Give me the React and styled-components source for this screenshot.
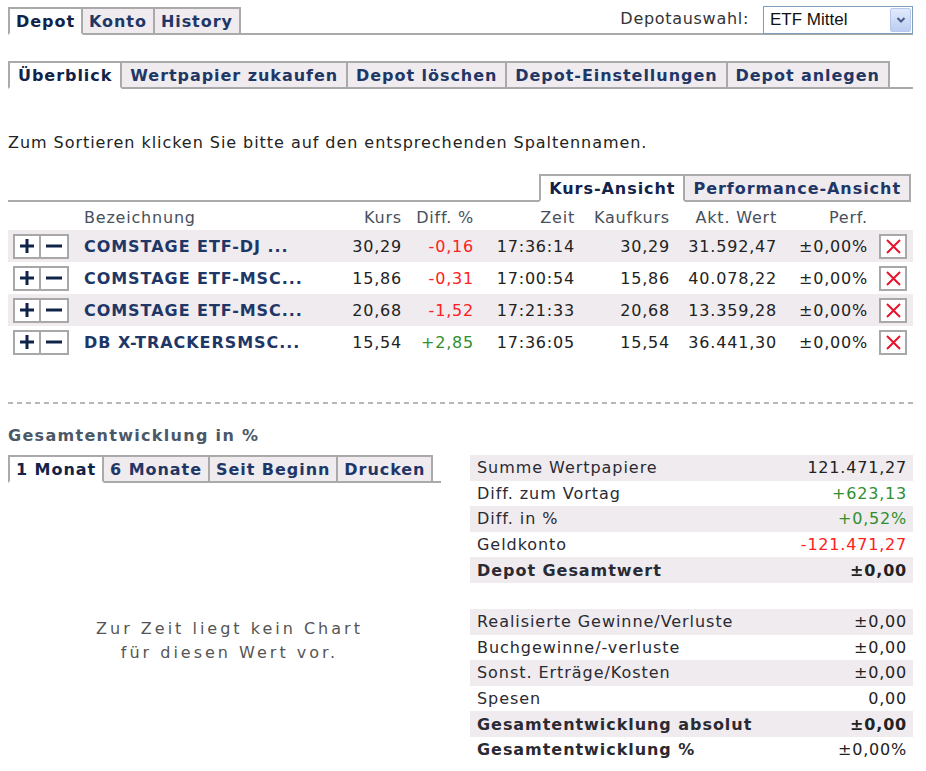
import React from "react";
import styled, { createGlobalStyle } from "styled-components";

const GlobalStyle = createGlobalStyle`
  body {
    margin: 0;
    background: #fff;
    font-family: "DejaVu Sans", Verdana, sans-serif;
    font-size: 16px;
    letter-spacing: 0.95px;
    color: #222;
  }
`;

const Page = styled.div`
  width: 905px;
  padding: 7px 0 0 8px;
`;

const TabStrip = styled.div`
  display: flex;
  align-items: stretch;
  height: 28px;
  margin-top: ${(p) => p.$top || 0}px;
`;

const Tab = styled.div`
  box-sizing: border-box;
  height: 28px;
  padding: 0 ${(p) => p.$pad || 7}px;
  border: 2px solid #aaa;
  border-left-width: ${(p) => (p.$first ? 2 : 0)}px;
  border-bottom-color: ${(p) => (p.$active ? "#fff" : "#aaa")};
  background: ${(p) => (p.$active ? "#fff" : "#efebef")};
  color: ${(p) => (p.$active ? "#12234a" : "#1f3766")};
  font-weight: bold;
  line-height: 25px;
  white-space: nowrap;
`;

const Filler = styled.div`
  flex: 1;
  border-bottom: 2px solid #aaa;
  display: flex;
  justify-content: flex-end;
  align-items: flex-end;
  gap: 14px;
`;

const Edge = styled.div`
  width: 2px;
`;

const SelectLabel = styled.span`
  color: #333;
  font-weight: normal;
  letter-spacing: 0.7px;
  padding-bottom: 5px;
`;

const SelectBox = styled.div`
  box-sizing: border-box;
  width: 150px;
  height: 28px;
  margin-bottom: -1px;
  border: 1px solid #7f9db9;
  background: #fff;
  display: flex;
  align-items: center;
  justify-content: space-between;
  padding: 0 1px 0 6px;
  font-family: "Liberation Sans", Arial, sans-serif;
  font-size: 17px;
  letter-spacing: 0;
  color: #111;
`;

const SelectArrow = styled.div`
  width: 21px;
  height: 24px;
  box-sizing: border-box;
  border: 1px solid #b6c8ee;
  border-radius: 2px;
  background: linear-gradient(#e2eafc, #bccdf3);
  display: flex;
  align-items: center;
  justify-content: center;
`;

const Hint = styled.p`
  margin: 44px 0 0;
  line-height: 20px;
  color: #222;
`;

const ViewRow = styled(TabStrip)`
  margin-top: 21px;
`;

const Grid = styled.div`
  display: grid;
  grid-template-columns: 76px 256px 62px 72px 101px 95px 107px 91px 45px;
  align-items: center;
  height: ${(p) => (p.$head ? 26 : 32)}px;
  margin-top: ${(p) => (p.$head ? 2 : 0)}px;
  background: ${(p) => (p.$shade ? "#efebef" : "transparent")};
`;

const HeadCell = styled.div`
  color: #47505c;
  letter-spacing: 0.8px;
  text-align: ${(p) => (p.$left ? "left" : "right")};
`;

const Cell = styled.div`
  text-align: right;
  white-space: nowrap;
  letter-spacing: 0.8px;
  color: ${(p) => p.$color || "#222"};
`;

const Name = styled.div`
  font-weight: bold;
  color: #1f3766;
  white-space: nowrap;
`;

const BtnGroup = styled.div`
  display: flex;
  padding-left: 5px;
`;

const IconBtn = styled.div`
  box-sizing: border-box;
  width: 28px;
  height: 25px;
  border: 2px solid #a8a8a8;
  border-left-width: ${(p) => (p.$joined ? 0 : 2)}px;
  background: #fff;
  display: flex;
  align-items: center;
  justify-content: center;
`;

const DelCell = styled.div`
  display: flex;
  justify-content: flex-end;
  padding-right: 6px;
`;

const Dashed = styled.div`
  height: 2px;
  margin-top: 44px;
  background: repeating-linear-gradient(to right, #b8b8b8 0 5px, transparent 5px 9px);
`;

const Heading = styled.h3`
  margin: 22px 0 0;
  font-size: 16px;
  line-height: 20px;
  letter-spacing: 1.3px;
  color: #4a5868;
`;

const Bottom = styled.div`
  display: flex;
  justify-content: space-between;
  margin-top: 9px;
`;

const ChartCol = styled.div`
  width: 433px;
`;

const NoChart = styled.div`
  padding-top: 134px;
  padding-left: 10px;
  text-align: center;
  line-height: 24px;
  color: #555;
  letter-spacing: 3px;
`;

const SumCol = styled.div`
  width: 443px;
`;

const SumTable = styled.div`
  margin-top: ${(p) => p.$top || 0}px;
`;

const SumRow = styled.div`
  display: flex;
  justify-content: space-between;
  align-items: center;
  height: 25.6px;
  padding: 0 6px 0 7px;
  background: ${(p) => (p.$shade ? "#efebef" : "transparent")};
  font-weight: ${(p) => (p.$bold ? "bold" : "normal")};
  color: #2a2a33;
`;

const SumVal = styled.span`
  letter-spacing: 0.8px;
  font-weight: ${(p) => (p.$plain ? "normal" : "inherit")};
  color: ${(p) => p.$color || "#222"};
`;

const RED = "#ff2020";
const GREEN = "#2f8f2f";

const Plus = () => (
  <svg width="16" height="16" viewBox="0 0 16 16">
    <path d="M8 1v14M1 8h14" stroke="#10244a" strokeWidth="3" />
  </svg>
);

const Minus = () => (
  <svg width="18" height="16" viewBox="0 0 18 16">
    <path d="M1 8h16" stroke="#10244a" strokeWidth="3" />
  </svg>
);

const Cross = () => (
  <svg width="17" height="17" viewBox="0 0 17 17">
    <path d="M2 2l13 13M15 2L2 15" stroke="#e8142a" strokeWidth="2" />
  </svg>
);

const Chevron = () => (
  <svg width="10" height="8" viewBox="0 0 10 8">
    <path d="M1.5 2l3.5 3.5L8.5 2" stroke="#4a5d86" strokeWidth="2" fill="none" />
  </svg>
);

const positions = [
  { name: "COMSTAGE ETF-DJ ...", kurs: "30,29", diff: "-0,16", zeit: "17:36:14", kauf: "30,29", wert: "31.592,47" },
  { name: "COMSTAGE ETF-MSC...", kurs: "15,86", diff: "-0,31", zeit: "17:00:54", kauf: "15,86", wert: "40.078,22" },
  { name: "COMSTAGE ETF-MSC...", kurs: "20,68", diff: "-1,52", zeit: "17:21:33", kauf: "20,68", wert: "13.359,28" },
  { name: "DB X-TRACKERSMSC...", kurs: "15,54", diff: "+2,85", zeit: "17:36:05", kauf: "15,54", wert: "36.441,30" },
];

const summary = [
  { label: "Summe Wertpapiere", value: "121.471,27" },
  { label: "Diff. zum Vortag", value: "+623,13", color: GREEN },
  { label: "Diff. in %", value: "+0,52%", color: GREEN },
  { label: "Geldkonto", value: "-121.471,27", color: RED },
  { label: "Depot Gesamtwert", value: "±0,00", bold: true },
];

const results = [
  { label: "Realisierte Gewinne/Verluste", value: "±0,00" },
  { label: "Buchgewinne/-verluste", value: "±0,00" },
  { label: "Sonst. Erträge/Kosten", value: "±0,00" },
  { label: "Spesen", value: "0,00" },
  { label: "Gesamtentwicklung absolut", value: "±0,00", bold: true },
  { label: "Gesamtentwicklung %", value: "±0,00%", bold: true, plain: true },
];

const Tabs = ({ items, active, pad }) =>
  items.map((t, i) => (
    <Tab key={t} $first={i === 0} $active={i === active} $pad={pad}>
      {t}
    </Tab>
  ));

const App = () => {
  return (
    <Page>
      <GlobalStyle />
      <TabStrip>
        <Tabs items={["Depot", "Konto", "History"]} active={0} pad={6} />
        <Filler>
          <SelectLabel>Depotauswahl:</SelectLabel>
          <SelectBox>
            ETF Mittel
            <SelectArrow>
              <Chevron />
            </SelectArrow>
          </SelectBox>
        </Filler>
      </TabStrip>

      <TabStrip $top={26}>
        <Tabs
          items={["Überblick", "Wertpapier zukaufen", "Depot löschen", "Depot-Einstellungen", "Depot anlegen"]}
          active={0}
          pad={8}
        />
        <Filler />
      </TabStrip>

      <Hint>Zum Sortieren klicken Sie bitte auf den entsprechenden Spaltennamen.</Hint>

      <ViewRow>
        <Filler />
        <Tabs items={["Kurs-Ansicht", "Performance-Ansicht"]} active={0} pad={8} />
        <Edge />
      </ViewRow>

      <Grid $head>
        <span />
        <HeadCell $left>Bezeichnung</HeadCell>
        <HeadCell>Kurs</HeadCell>
        <HeadCell>Diff. %</HeadCell>
        <HeadCell>Zeit</HeadCell>
        <HeadCell>Kaufkurs</HeadCell>
        <HeadCell>Akt. Wert</HeadCell>
        <HeadCell>Perf.</HeadCell>
        <span />
      </Grid>

      {positions.map((p, i) => (
        <Grid key={i} $shade={i % 2 === 0}>
          <BtnGroup>
            <IconBtn>
              <Plus />
            </IconBtn>
            <IconBtn $joined>
              <Minus />
            </IconBtn>
          </BtnGroup>
          <Name>{p.name}</Name>
          <Cell>{p.kurs}</Cell>
          <Cell $color={p.diff.startsWith("+") ? GREEN : RED}>{p.diff}</Cell>
          <Cell>{p.zeit}</Cell>
          <Cell>{p.kauf}</Cell>
          <Cell>{p.wert}</Cell>
          <Cell>±0,00%</Cell>
          <DelCell>
            <IconBtn>
              <Cross />
            </IconBtn>
          </DelCell>
        </Grid>
      ))}

      <Dashed />
      <Heading>Gesamtentwicklung in %</Heading>

      <Bottom>
        <ChartCol>
          <TabStrip>
            <Tabs items={["1 Monat", "6 Monate", "Seit Beginn", "Drucken"]} active={0} pad={6} />
            <Filler />
          </TabStrip>
          <NoChart>
            Zur Zeit liegt kein Chart
            <br />
            für diesen Wert vor.
          </NoChart>
        </ChartCol>

        <SumCol>
          <SumTable>
            {summary.map((r, i) => (
              <SumRow key={r.label} $shade={i % 2 === 0} $bold={r.bold}>
                <span>{r.label}</span>
                <SumVal $color={r.color}>{r.value}</SumVal>
              </SumRow>
            ))}
          </SumTable>
          <SumTable $top={26}>
            {results.map((r, i) => (
              <SumRow key={r.label} $shade={i % 2 === 0} $bold={r.bold}>
                <span>{r.label}</span>
                <SumVal $plain={r.plain}>{r.value}</SumVal>
              </SumRow>
            ))}
          </SumTable>
        </SumCol>
      </Bottom>
    </Page>
  );
};

export default App;
